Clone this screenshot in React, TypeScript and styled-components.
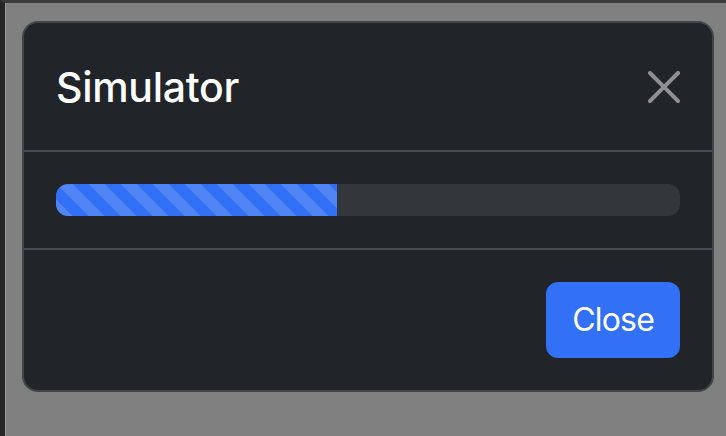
import React from "react";
import styled, { createGlobalStyle } from "styled-components";

const GlobalStyle = createGlobalStyle`
  html, body { margin: 0; padding: 0; }
  body {
    width: 726px;
    height: 436px;
    overflow: hidden;
    background: #808080;
    font-family: Inter, "Liberation Sans", Arial, sans-serif;
    -webkit-font-smoothing: antialiased;
  }
  * { box-sizing: border-box; }
`;

const Page = styled.div`
  width: 726px;
  height: 436px;
  background: #808080;
  border-top: 3px solid #3c3c3c;
  border-left: 5px solid #262626;
  display: flex;
`;

const Backdrop = styled.div`
  flex: 1;
  border-left: 1px solid #9c9c9c;
  padding: 18px 0 0 16px;
`;

const Modal = styled.div`
  width: 692px;
  background: #212529;
  border: 2px solid rgba(255, 255, 255, 0.15);
  border-radius: 16px;
  display: flex;
  flex-direction: column;
  color: #fff;
`;

const Header = styled.div`
  display: flex;
  align-items: center;
  justify-content: space-between;
  padding: 33px 32px 32px;
  border-bottom: 2px solid #474c52;
`;

const Title = styled.h5`
  margin: 0;
  font-size: 41px;
  font-weight: 500;
  line-height: 62px;
  color: #fff;
  letter-spacing: -0.3px;
`;

const CloseX = styled.button`
  width: 32px;
  height: 32px;
  padding: 0;
  border: 0;
  background: transparent;
  color: #8e9093;
  display: flex;
  align-items: center;
  justify-content: center;
  cursor: pointer;
`;

const Body = styled.div`
  padding: 32px;
`;

const Track = styled.div`
  height: 32px;
  background: #33373c;
  border-radius: 12px;
  overflow: hidden;
  display: flex;
`;

const Bar = styled.div`
  height: 100%;
  background-color: #3270f5;
  background-image: linear-gradient(
    45deg,
    rgba(255, 255, 255, 0.15) 25%,
    transparent 25%,
    transparent 50%,
    rgba(255, 255, 255, 0.15) 50%,
    rgba(255, 255, 255, 0.15) 75%,
    transparent 75%,
    transparent
  );
  background-size: 32px 32px;
`;

const Footer = styled.div`
  display: flex;
  justify-content: flex-end;
  align-items: center;
  padding: 24px;
  border-top: 2px solid #474c52;
`;

const Button = styled.button`
  margin: 8px;
  padding: 12px 24px;
  font-family: inherit;
  font-size: 32px;
  line-height: 48px;
  font-weight: 400;
  letter-spacing: -0.8px;
  color: #fff;
  background: #3270f5;
  border: 2px solid #3270f5;
  border-radius: 12px;
  cursor: pointer;
`;

export default function App() {
  const progress = 45;
  return (
    <>
      <GlobalStyle />
      <Page>
        <Backdrop>
          <Modal>
            <Header>
              <Title>Simulator</Title>
              <CloseX aria-label="Close">
                <svg width="32" height="32" viewBox="0 0 16 16" fill="currentColor">
                  <path d="M.293.293a1 1 0 0 1 1.414 0L8 6.586 14.293.293a1 1 0 1 1 1.414 1.414L9.414 8l6.293 6.293a1 1 0 0 1-1.414 1.414L8 9.414l-6.293 6.293a1 1 0 0 1-1.414-1.414L6.586 8 .293 1.707a1 1 0 0 1 0-1.414z" />
                </svg>
              </CloseX>
            </Header>
            <Body>
              <Track>
                <Bar style={{ width: `${progress}%` }} />
              </Track>
            </Body>
            <Footer>
              <Button>Close</Button>
            </Footer>
          </Modal>
        </Backdrop>
      </Page>
    </>
  );
}
